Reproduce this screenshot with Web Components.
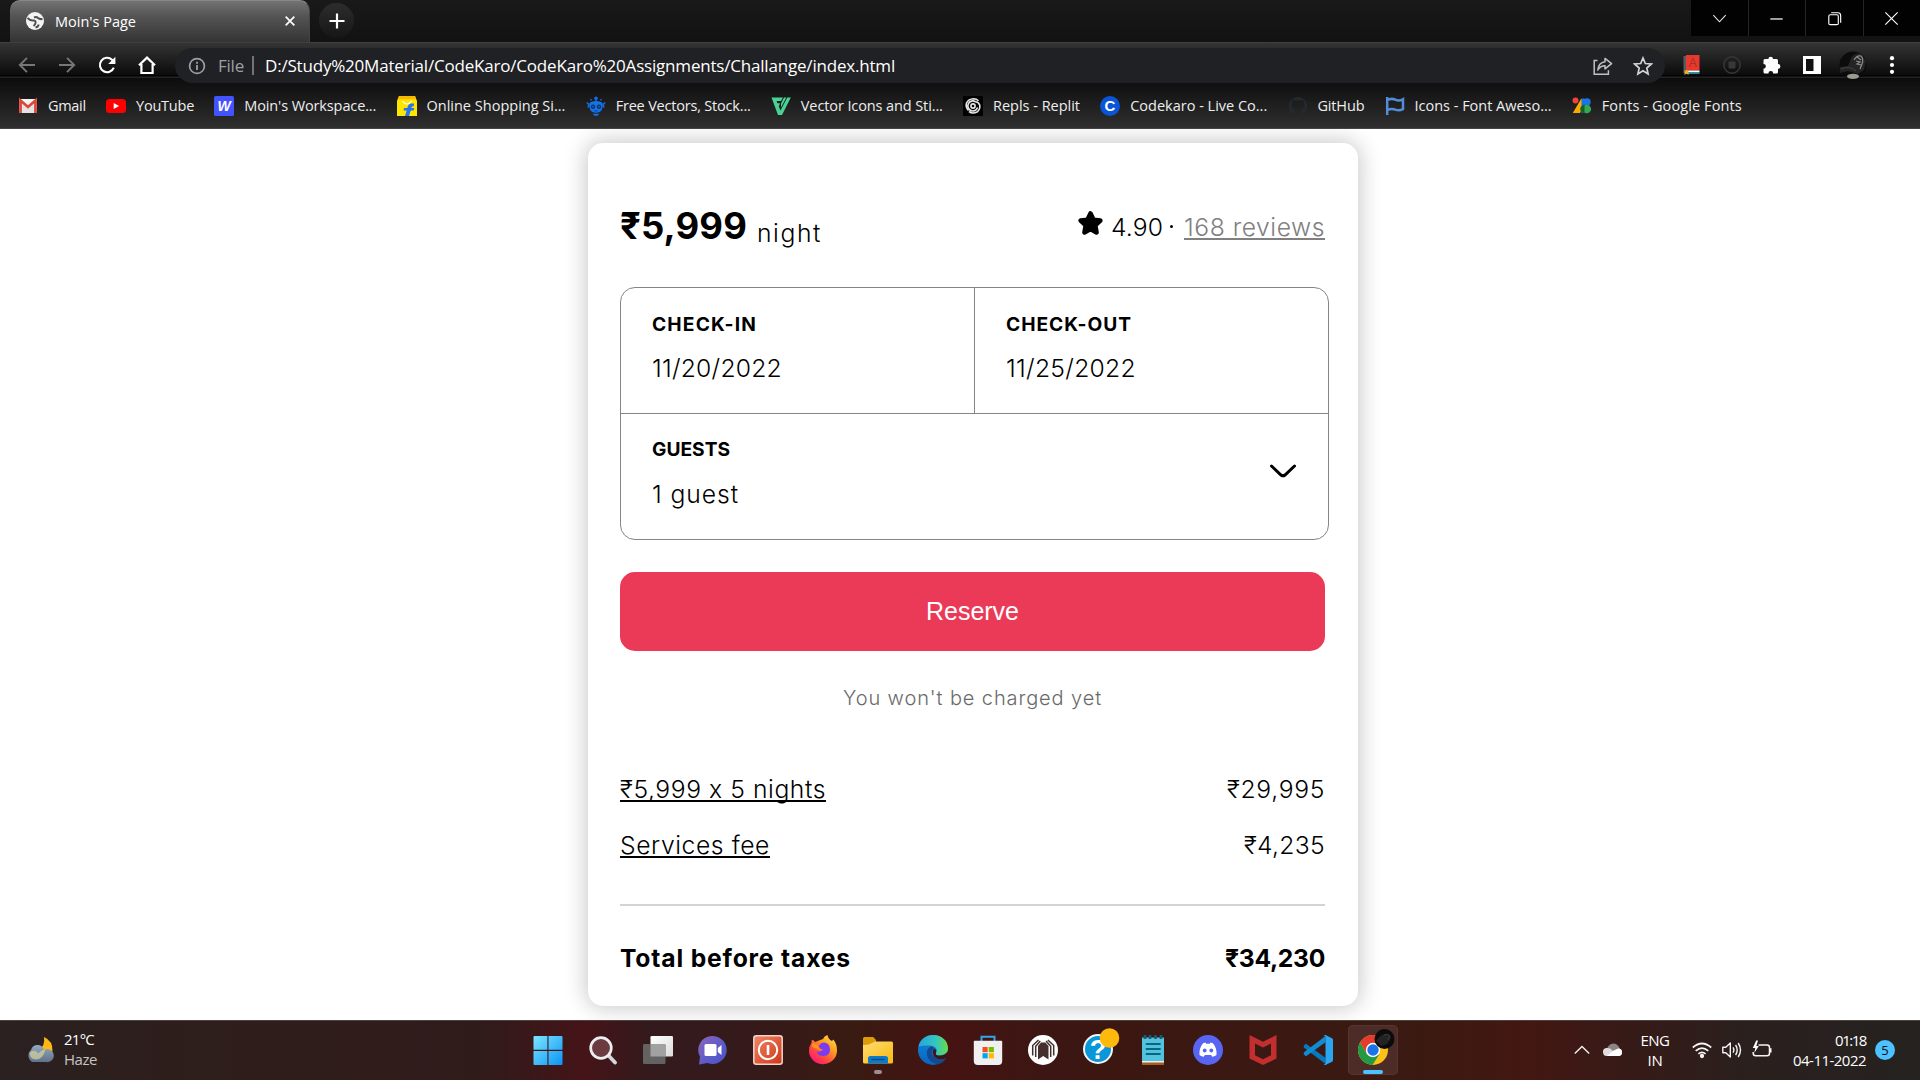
<!DOCTYPE html>
<html lang="en">
<head>
<meta charset="utf-8">
<title>Moin's Page</title>
<style>
html,body{margin:0;height:100%;overflow:hidden;background:#fff}
</style>
</head>
<body>
<desktop-screen></desktop-screen>
<script>
const define = (name, html, setup) => {
  const tpl = document.createElement('template');
  tpl.innerHTML = html;
  customElements.define(name, class extends HTMLElement {
    connectedCallback() {
      if (this.shadowRoot) return;
      this.attachShadow({mode: 'open'}).append(document.importNode(tpl.content, true));
      if (setup) setup(this, this.shadowRoot);
    }
  });
};

/* One line of text tracked so that it fills the given width. */
define('fit-text', `<style>:host{display:block;white-space:nowrap;flex:none}</style><span><slot></slot></span>`, (el, root) => {
  const w = +el.getAttribute('w');
  const span = root.querySelector('span');
  if (!w) return;
  const natural = span.getBoundingClientRect().width;
  span.style.letterSpacing = ((w - natural) / [...el.textContent].length).toFixed(3) + 'px';
  el.style.width = w + 'px';
});

const ICONS = {
  globe: `<svg viewBox="0 0 20 20"><circle cx="10" cy="10" r="9" fill="#f4f4f4"/><path d="M2.500 7q3 3 6 2.500 2.500 0 2 2.500-.5 2-2 3M17.500 8q-3 .5-4.500-1-1.500-1.500-4-.5M10.500 16.500q3-.5 3-3" fill="none" stroke="#505050" stroke-width="2"/></svg>`,
  close: `<svg viewBox="0 0 20 20"><path d="M5.2 5.2l9.6 9.6M14.8 5.2l-9.6 9.6" stroke="#fff" stroke-width="1.9"/></svg>`,
  plus: `<svg viewBox="0 0 20 20"><path d="M10 2.5v15M2.5 10h15" stroke="#fff" stroke-width="2.2"/></svg>`,
  back: `<svg viewBox="0 0 20 20"><path d="M18 10H3M10 2.8L2.8 10l7.2 7.2" fill="none" stroke="#777" stroke-width="1.9"/></svg>`,
  forward: `<svg viewBox="0 0 20 20"><path d="M2 10h15M10 2.8l7.2 7.2-7.2 7.2" fill="none" stroke="#777" stroke-width="1.9"/></svg>`,
  reload: `<svg viewBox="0 0 20 20"><path d="M16.8 12.6A7.2 7.2 0 1 1 15 4.7l1.6 1.7" fill="none" stroke="#fff" stroke-width="2.1"/><path d="M18.4 1.8v7.2h-7.2z" fill="#fff"/></svg>`,
  home: `<svg viewBox="0 0 20 20"><path d="M2 10.3L10 2.6l8 7.7M4.4 9v9h11.2V9" fill="none" stroke="#fff" stroke-width="2.2"/></svg>`,
  info: `<svg viewBox="0 0 20 20"><circle cx="10" cy="10" r="7.4" fill="none" stroke="#9aa0a6" stroke-width="1.7"/><path d="M10 9v5M10 5.8v2" stroke="#9aa0a6" stroke-width="1.8"/></svg>`,
  share: `<svg viewBox="0 0 20 20"><path d="M4.5 4.5H1.2v13.700h14.200v-4" fill="none" stroke="#bdc1c6" stroke-width="1.5"/><path d="M12 2.400l6.600 5.300-6.600 5.200V9.800c-3.400 0-5.600 1.400-7.200 4.200.4-4.400 3-7.600 7.200-8.200z" fill="none" stroke="#bdc1c6" stroke-width="1.5" stroke-linejoin="round"/></svg>`,
  bookmark: `<svg viewBox="0 0 20 20"><path d="M10 2l2.3 5.5 6 .5-4.5 4 1.3 5.900L10 14.800l-5.100 3.100 1.300-5.900-4.500-4 6-.5z" fill="none" stroke="#d0d3d8" stroke-width="1.7"/></svg>`,
  book: `<svg viewBox="0 0 20 20"><path d="M1.500 1h3v17h-3z" fill="#555d63"/><path d="M4 0h13.500v15.500H4z" fill="#e8392f"/><path d="M4 15.500h13.500v2H4z" fill="#fff"/><path d="M4 17.500h13.500v1.500H4z" fill="#1a86a8"/><path d="M2.500 15.500h4V20l-2-1.500-2 1.500z" fill="#e9b21d"/><text x="10.700" y="12.300" text-anchor="middle" font-family="Liberation Sans" font-size="12" fill="#b02c25">A</text></svg>`,
  record: `<svg viewBox="0 0 20 20"><circle cx="10" cy="10" r="8.200" fill="none" stroke="#383838" stroke-width="1.400"/><rect x="6.500" y="6.500" width="7" height="7" rx="1" fill="#383838"/></svg>`,
  puzzle: `<svg viewBox="0 0 20 20"><path d="M6.400 4a2.300 2.300 0 0 1 4.600 0h3.500a1.500 1.500 0 0 1 1.500 1.500V9a2.400 2.400 0 0 1 0 4.800v3.200a1.500 1.500 0 0 1-1.500 1.500h-3.300a2.400 2.400 0 0 0-4.800 0H3A1.500 1.500 0 0 1 1.500 17v-3.300a2.400 2.400 0 0 0 0-4.800V5.500A1.500 1.500 0 0 1 3 4z" fill="#fff"/></svg>`,
  panel: `<svg viewBox="0 0 20 20"><path d="M1 1h18v18H1z" fill="#fff"/><path d="M4 4h7.500v12H4z" fill="#111"/></svg>`,
  avatar: `<svg viewBox="0 0 28 28"><circle cx="14" cy="14" r="13.500" fill="#0c0c0c"/><path d="M1 16l8-1 3-8q4-6 10-4l5 7-2 9-6 4-10-3-8 2z" fill="#242424"/><path d="M15 9q3-5 7-4 3 3 1 8l-2 5M17 10l4 1-3 2 4 1M18 6l4 3" fill="none" stroke="#8d8d8d" stroke-width="1.200"/><path d="M2 18q8-4 15 2" fill="none" stroke="#444"/><ellipse cx="14" cy="25.300" rx="6" ry="2.600" fill="#9a9c92"/></svg>`,
  dots: `<svg viewBox="0 0 20 20" fill="#fff"><circle cx="10" cy="3.200" r="2.100"/><circle cx="10" cy="10" r="2.100"/><circle cx="10" cy="16.800" r="2.100"/></svg>`,
  wdown: `<svg viewBox="0 0 20 20"><path d="M3.500 6.500l6.500 7 6.500-7" fill="none" stroke="#eee" stroke-width="1.100"/></svg>`,
  wmin: `<svg viewBox="0 0 20 20"><path d="M3.500 10.500h13" stroke="#fff" stroke-width="1.300"/></svg>`,
  wmax: `<svg viewBox="0 0 20 20" fill="none" stroke="#fff" stroke-width="1.200"><rect x="4" y="6" width="10" height="10.500" rx="1.500"/><path d="M6.500 4h7a3 3 0 0 1 3 3v7.500"/></svg>`,
  wclose: `<svg viewBox="0 0 20 20"><path d="M3.500 3.500l13 13M16.500 3.500l-13 13" stroke="#fff" stroke-width="1.200"/></svg>`,
  gmail: `<svg viewBox="0 0 20 20"><path d="M1 3h18v14H1z" fill="#f4f4f4"/><path d="M4 17V8l6 5 6-5v9z" fill="#e4e2e2"/><path d="M2.500 17V4.500L10 11l7.500-6.500V17" fill="none" stroke="#da483c" stroke-width="2.800"/></svg>`,
  youtube: `<svg viewBox="0 0 20 20"><rect y="3" width="20" height="14" rx="3.500" fill="#f00"/><path d="M7.700 7v6l5.400-3z" fill="#fff"/></svg>`,
  workspace: `<svg viewBox="0 0 20 20"><rect width="20" height="20" rx="1.500" fill="#4353ff"/><text x="10" y="14.700" text-anchor="middle" font-family="Liberation Sans" font-size="14" font-weight="bold" font-style="italic" fill="#fff">W</text></svg>`,
  shopping: `<svg viewBox="0 0 20 20"><path d="M2 0h16l2 5v15H0V5z" fill="#ffe500"/><path d="M2 0h16l1.300 3.200H.7z" fill="#f7b900"/><path d="M5.500 5q4.500 6 9 0" fill="none" stroke="#fff" stroke-width="1.200"/><path d="M17 7.500c-5-.6-6 1.500-6.700 4.500H7l-.5 2.500h3.200L8 20h4l1.700-5.500h3L17.300 12h-3c.3-1.500 1-2 2.500-1.800z" fill="#2874f0"/></svg>`,
  robot: `<svg viewBox="0 0 20 20"><path d="M3.500 7C6 4.300 14 4.300 16.500 7q.8 4-.8 7-1.700 2.800-5.700 2.800T4.300 14q-1.600-3-.8-7z" fill="#1273eb"/><path d="M6.500 17.700h7l-2 2h-3z" fill="#1273eb"/><circle cx="10" cy="2.200" r="1.700" fill="#1273eb"/><path d="M.8 6.500l2 2-.8 3M19.200 6.500l-2 2 .8 3M5.500 4.500l-1-1.500M14.500 4.500l1-1.500M10 3v3" stroke="#1273eb" stroke-width="1.300" fill="none"/><circle cx="7" cy="10.700" r="2.200" fill="#15315a"/><circle cx="13" cy="10.700" r="2.200" fill="#15315a"/><circle cx="7" cy="10.700" r=".8" fill="#1273eb"/><circle cx="13" cy="10.700" r=".8" fill="#1273eb"/><path d="M8.300 14.800h3.400" stroke="#0a4194"/></svg>`,
  vector: `<svg viewBox="0 0 20 20"><path d="M.5 1.500h11.500L10 5H5.600l.8 2.200H9L7.800 10.400l1.700 4.100L16.300 1.500H19.800L11 19H7z" fill="#49d295"/><path d="M13 1.500h2.300L10 11.500V7.500z" fill="#49d295"/></svg>`,
  replit: `<svg viewBox="0 0 20 20"><rect width="20" height="20" rx="1" fill="#000"/><g fill="none" stroke="#e6e6e6" stroke-width="1.600"><circle cx="10" cy="10" r="2.100"/><path d="M14.600 11.500A5 5 0 1 1 12.500 5.700q3 .3 4.200 3.300.8 4.500-2.700 7-4.500 2.200-8-.5"/><path d="M5.500 14.500Q2.200 11 3.500 7q2-4 7-4.300 3 0 5 2"/></g></svg>`,
  codekaro: `<svg viewBox="0 0 20 20"><circle cx="10" cy="10" r="10" fill="#0a54d8"/><text x="10" y="15.200" text-anchor="middle" font-family="Liberation Sans" font-size="15" font-weight="bold" fill="#fff">C</text></svg>`,
  github: `<svg viewBox="0 0 20 20"><path d="M6.500 19A9.300 9.300 0 1 1 13.500 19v-3q0-1.500-1-2.200 4-.6 4-4.600 0-1.600-1-2.800.3-1.400-.2-2.600-1.300 0-2.700 1a9 9 0 0 0-5.200 0q-1.400-1-2.700-1-.5 1.200-.2 2.600-1 1.200-1 2.800 0 4 4 4.600-1 .7-1 2.200z" fill="#23292f"/></svg>`,
  flag: `<svg viewBox="0 0 20 20"><path d="M2.200 1v18M2.200 4.300q4-2.500 8-.6t7.800-.5v10q-4 2-7.800.4t-8 .5" fill="none" stroke="#538dd7" stroke-width="2.500"/></svg>`,
  gfonts: `<svg viewBox="0 0 20 20"><path d="M9 3h6L8 17H.8z" fill="#fbab00"/><path d="M9.500 2.500h3V17h-3z" fill="#1a73e8"/><circle cx="15" cy="6" r="3.700" fill="#1a73e8"/><circle cx="14.800" cy="13" r="4.300" fill="#34a853"/><path d="M12.500 8.700a4.300 4.300 0 0 0 0 8.600z" fill="#0d652d"/><circle cx="3.500" cy="4.500" r="3" fill="#f44336"/></svg>`,
  star: `<svg viewBox="0 0 25 25"><path d="M12.500 2.500l3 6.200 6.800.9-5 4.800 1.200 7-6-3.300-6 3.300 1.200-7-5-4.800 6.800-.9z" fill="#000" stroke="#000" stroke-width="4.600" stroke-linejoin="round"/></svg>`,
  chevron: `<svg viewBox="0 0 26 26"><path d="M1.500 8l9.500 9q2 1.600 4 0l9.500-9" fill="none" stroke="#000" stroke-width="3" stroke-linecap="round"/></svg>`,
  weather: `<svg viewBox="0 0 30 30"><defs><linearGradient id="c" x2="0" y2="1"><stop stop-color="#93a9bf"/><stop offset="1" stop-color="#61728a"/></linearGradient></defs><path d="M20 1q9 4 8.500 14-2 4-6 5l-8-6q7-4 5.500-13z" fill="#fdb813"/><path d="M8 26a7.500 7.500 0 0 1-1-12q1.500-5 6.500-5t6.500 5a6.500 6.500 0 1 1 2 12z" fill="url(#c)"/><path d="M5.500 17q5-4.500 9 .5 3-4 7-4-2.500 10-10 10-5 0-6-6.500z" fill="#cfcf9d" opacity=".75"/></svg>`,
  start: `<svg viewBox="0 0 30 30"><defs><linearGradient id="s" x2="1" y2="1"><stop stop-color="#7be7ff"/><stop offset="1" stop-color="#0c93f5"/></linearGradient></defs><path d="M.5 2a1 1 0 0 1 1-1H14.400v13.800H.5zM15.500 1h13a1 1 0 0 1 1 1v12.800h-14zM.5 15.900h13.900V30H1.500a1 1 0 0 1-1-1zM15.500 15.900h14V29a1 1 0 0 1-1 1h-13z" fill="url(#s)"/></svg>`,
  search: `<svg viewBox="0 0 30 30"><path d="M20.500 20.500l6.500 7" stroke="#d3d6da" stroke-width="3.800" stroke-linecap="round"/><circle cx="13" cy="13" r="10.300" fill="#6a3b40" stroke="#eceef0" stroke-width="2.700"/></svg>`,
  taskview: `<svg viewBox="0 0 30 30"><defs><linearGradient id="t" x2="1" y2="1"><stop stop-color="#fff"/><stop offset="1" stop-color="#dcdcdc"/></linearGradient></defs><rect x="7.500" y="1" width="22.500" height="20.500" rx="1.300" fill="url(#t)"/><rect y="9" width="22.500" height="20" rx="1.300" fill="#626262"/><path d="M7.500 9H21.200a1.300 1.300 0 0 1 1.300 1.300V21.500h-15z" fill="#a1a1a1"/></svg>`,
  chat: `<svg viewBox="0 0 30 30"><defs><linearGradient id="h" x2="1" y2="1"><stop stop-color="#8d66b8"/><stop offset=".6" stop-color="#5a5bc9"/><stop offset="1" stop-color="#4a50c8"/></linearGradient></defs><path d="M15 1a14 14 0 1 1-5.500 27L1 29.500l1-7.800A14 14 0 0 1 15 1z" fill="url(#h)"/><rect x="6.500" y="9" width="12" height="12" rx="1.500" fill="#fff"/><path d="M19.800 13l3.700-3v10l-3.700-3z" fill="#fff"/></svg>`,
  power: `<svg viewBox="0 0 30 30"><defs><linearGradient id="p" x2="1" y2="1"><stop stop-color="#f08766"/><stop offset="1" stop-color="#cf3516"/></linearGradient></defs><rect x=".8" y=".8" width="28.400" height="28.400" rx="2.500" fill="url(#p)" stroke="#efd5cf" stroke-width="1.500"/><circle cx="15" cy="15" r="9.200" fill="none" stroke="#fff" stroke-width="2"/><path d="M15 10v10" stroke="#fff" stroke-width="2.600"/></svg>`,
  firefox: `<svg viewBox="0 0 30 30"><defs><linearGradient id="f" x1="1" x2=".2" y2="1"><stop stop-color="#fff44f"/><stop offset=".4" stop-color="#ff9a1f"/><stop offset=".7" stop-color="#ff4a3d"/><stop offset="1" stop-color="#ff1283"/></linearGradient></defs><path d="M15 4Q16 1 19.500 0q.5 4 4.500 6l1.300-1.500Q29 9 29 15.500A14 13.500 0 0 1 1 16q0-5 2.500-8l.3-3Q6 5 7 7z" fill="url(#f)"/><path d="M15.500 7.500q6 0 6.500 6.500.3 7-6.500 7-5.500 0-7-4.500 4 1 6.500-1.500-3-.5-4.200-3.500 1-3.500 4.700-4z" fill="#7a3cf0"/><path d="M10.200 11.500Q8.500 8 4.500 8.500 3 12 6 13q3 0 4.500 2l5-.5q-4.500 0-5.300-3z" fill="#ff9320"/></svg>`,
  folder: `<svg viewBox="0 0 30 30"><defs><linearGradient id="o" x2="1" y2="1"><stop stop-color="#ffdd72"/><stop offset="1" stop-color="#f9b90f"/></linearGradient></defs><path d="M0 3.500A1.500 1.500 0 0 1 1.500 2h8.700L13 5v6H0z" fill="#dc9c0a"/><path d="M0 10q5 .5 9-2l3-1.500h16.500A1.500 1.500 0 0 1 30 8v19a1.500 1.500 0 0 1-1.500 1.500h-27A1.500 1.500 0 0 1 0 27z" fill="url(#o)"/><path d="M5 28.500v-5a2.500 2.500 0 0 1 2.500-2.500h15a2.500 2.500 0 0 1 2.500 2.500v5z" fill="#0d79c8"/><path d="M9 24.500h12" stroke="#074f87" stroke-width="1.500" stroke-linecap="round"/></svg>`,
  edge: `<svg viewBox="0 0 30 30"><defs><linearGradient id="e" x2="1"><stop stop-color="#23a5e0"/><stop offset=".6" stop-color="#35c7bd"/><stop offset="1" stop-color="#69dd42"/></linearGradient><linearGradient id="g" x2="0" y2="1"><stop stop-color="#128bd8"/><stop offset="1" stop-color="#0a63bd"/></linearGradient></defs><circle cx="15" cy="15" r="15" fill="url(#g)"/><path d="M.5 11.500C2 4 8.500 0 15 0c9 0 15 6 15 13 0 5-4 7.500-8 7.500-3.500 0-5-1.300-4-2.700 2-3 0-6.300-4.500-7-5-.5-9 0-13 .7z" fill="url(#e)"/><path d="M13.500 11Q8 13.500 9 20t11 9.500q6-2 8.500-7-6 3.500-11 .5-6-4-1.500-10z" fill="#124a91"/><path d="M18 17.800q-1 2.700 4 2.700 4.500 0 8-4l1 5-2.500 1.500q-6 2.500-10.500 0-5-3.500-2-9.500 3 1 2 4.300z" fill="#421512"/></svg>`,
  store: `<svg viewBox="0 0 30 30"><path d="M8.500 7V1.800h13V7" fill="none" stroke="#31a7e4" stroke-width="2"/><path d="M.8 6.500a.8.8 0 0 1 .8-.8h26.800a.8.8 0 0 1 .8.800V26a4 4 0 0 1-4 4H4.800a4 4 0 0 1-4-4z" fill="#f0f0f0"/><path d="M9.500 12h5.200v5.200H9.500z" fill="#f25022"/><path d="M15.700 12h5.200v5.200h-5.200z" fill="#7fba00"/><path d="M9.500 18.200h5.200v5.200H9.500z" fill="#00a4ef"/><path d="M15.700 18.200h5.200v5.200h-5.200z" fill="#ffb900"/></svg>`,
  arch: `<svg viewBox="0 0 30 30"><circle cx="15" cy="15" r="15" fill="#fff"/><path d="M10 24.500V11l3-3.500h4.500l3 3.500v13.500L15.200 21z" fill="#452f2d"/><path d="M4.700 20.500V10.500L10.500 5M25.700 20.500V10.500L19.900 5M7.700 22V11.300L12.300 6M22.700 22V11.300L18.100 6" fill="none" stroke="#452f2d" stroke-width="1.500"/></svg>`,
  help: `<svg viewBox="0 0 38 38"><circle cx="15" cy="22" r="14" fill="#0a97d9" stroke="#f4f4f4" stroke-width="2"/><text x="15" y="31.500" text-anchor="middle" font-family="Liberation Sans" font-size="27" font-weight="bold" fill="#fff">?</text><circle cx="26.500" cy="11" r="9.800" fill="#ffb90d"/></svg>`,
  notepad: `<svg viewBox="0 0 30 30"><path d="M4 27h22v3H4z" fill="#a75c20"/><path d="M4 25h22v2.500H4z" fill="#f1eee7"/><path d="M4 2.500h22V26H4z" fill="#52c3de"/><path d="M7 0v4M12 0v4M17.500 0v4M23 0v4" stroke="#135d78" stroke-width="2.600"/><path d="M8.500 9h13.500M8.500 14h13.500M8.500 19h13.500" stroke="#08667f" stroke-width="1.800" stroke-linecap="round"/></svg>`,
  discord: `<svg viewBox="0 0 30 30"><circle cx="15" cy="15" r="15" fill="#5865f2"/><path d="M10 8.300l2.500-.8.700 1.200h3.600l.7-1.200 2.500.8q4 5 3.500 11.700-2 1.500-4.300 1.700l-1-1.700h-6.400l-1 1.700Q8.500 21.500 6.500 20 6 13.300 10 8.300z" fill="#fff"/><circle cx="11.700" cy="15.500" r="1.900" fill="#5865f2"/><circle cx="18.300" cy="15.500" r="1.900" fill="#5865f2"/></svg>`,
  mcafee: `<svg viewBox="0 0 30 30"><path d="M1.500 0L15 6.800 28.500 0v23.500L15 30 1.500 23.500zM7 8.500v11.700l8 4 8-4V8.500l-8 4z" fill="#c22f2e" fill-rule="evenodd"/></svg>`,
  vscode: `<svg viewBox="0 0 30 30"><path d="M.8 10.500L3 8.700l19.500 14V29L.8 12.500z" fill="#0878be"/><path d="M.8 19.500L3 21.300l19.500-14V1L.8 17.500z" fill="#108cd4"/><path d="M22.500 0L29 3.200q1 .4 1 1.500v20.600q0 1.100-1 1.500L22.500 30q-1 .2-1.800-.7 1.800.2 1.800-1.600V2.300Q22.500.5 20.700.7q.8-.9 1.800-.7z" fill="#2aa5ef"/></svg>`,
  chrome: `<svg viewBox="0 0 38 38"><circle cx="15" cy="23" r="15" fill="#fbc116"/><path d="M15 8A15 15 0 0 0 2 15.500L8.500 26.500 15 16h13.200A15 15 0 0 0 15 8z" fill="#e33b2e"/><path d="M2 15.500A15 15 0 0 0 14.500 38L21.500 27 15 30q-4 0-6.500-3.500z" fill="#229a45"/><circle cx="15" cy="23" r="7.200" fill="#fff"/><circle cx="15" cy="23" r="5.700" fill="#1a73e8"/><circle cx="26.500" cy="12" r="10" fill="#0b0b0b"/><path d="M18 14q4-6 9-7 5 0 6 4l-4 6-6 2z" fill="#232323"/><path d="M26 8q4-2 6 1l-2 4" fill="none" stroke="#3d3d3d"/></svg>`,
  up: `<svg viewBox="0 0 20 20"><path d="M2 14l8-8 8 8" fill="none" stroke="#eee" stroke-width="1.600"/></svg>`,
  cloud: `<svg viewBox="0 0 20 20"><path d="M3.500 11Q4 6 8 4q5-2 8 3l1 4z" fill="#8e8583"/><path d="M4.500 16a4 4 0 0 1-1-8q4-.5 6 3l6-2.500A3.800 3.800 0 0 1 16 16z" fill="#ddd"/><path d="M4 16l6-5 5.500-2.500A3.800 3.800 0 0 1 16 16z" fill="#fff"/></svg>`,
  wifi: `<svg viewBox="0 0 20 20" fill="none" stroke="#f4f4f4" stroke-width="1.700"><path d="M.8 7.500q9.200-8 18.400 0M3.700 10.800q6.300-5.500 12.600 0M6.400 13.800q3.600-3 7.200 0"/><circle cx="10" cy="16" r="1.300" fill="#fff"/></svg>`,
  speaker: `<svg viewBox="0 0 20 20" fill="none" stroke="#f4f4f4" stroke-width="1.400"><path d="M.8 7.300h3L8.300 3v14l-4.500-4.300h-3z" stroke-linejoin="round"/><path d="M11 7.300q1.800 2.700 0 5.400M13.600 5q3.200 5 0 10M16.200 3q4.600 7 0 14"/></svg>`,
  battery: `<svg viewBox="0 0 20 20"><path d="M6.500 5H15a2.500 2.500 0 0 1 2.500 2.500v5.800a2.500 2.500 0 0 1-2.500 2.500H3.700a2.500 2.500 0 0 1-2.500-2.500V12" fill="none" stroke="#f4f4f4" stroke-width="1.500"/><path d="M18 8.200h1.500v4.400H18z" fill="#fff"/><path d="M4.200.5L.8 8h2.500l-1 5 4.500-7H4.300L6 .5z" fill="#fff"/></svg>`
};

define('ui-icon', `<style>:host{display:block;flex:none;width:var(--s,20px);height:var(--s,20px)}svg{display:block;width:100%;height:100%}</style>`, (el, root) => {
  const box = document.createElement('template');
  box.innerHTML = ICONS[el.getAttribute('name')];
  root.append(box.content);
});

define('tab-strip', `<style>
:host{display:flex;height:42px;background:linear-gradient(#191919,#121212);justify-content:space-between;align-items:flex-start;font-size:14.5px}
.left{display:flex;padding-left:10px}
.tab{box-sizing:border-box;width:300px;height:43px;border-radius:10px 10px 0 0;background:linear-gradient(#737373,#555 35%,#333);display:flex;align-items:center;padding:0 10px 2px 15px;color:#fff;border-top:1px solid #888;border-right:1px solid #444}
.tab fit-text{margin-left:10px;flex:1}
.add{width:35px;height:35px;border-radius:50%;background:linear-gradient(#2d2d2d,#161616);margin:3px 0 0 9px;display:flex;align-items:center;justify-content:center}
.win{display:flex;width:229px;height:36px;background:#252525;gap:1px}
.win span{flex:1;background:#020202;display:flex;align-items:center;justify-content:center;--s:19px}
</style>
<div class="left"><div class="tab"><ui-icon name="globe"></ui-icon><fit-text w="81">Moin's Page</fit-text><ui-icon name="close" style="--s:18px"></ui-icon></div><div class="add"><ui-icon name="plus"></ui-icon></div></div>
<div class="win"><span><ui-icon name="wdown"></ui-icon></span><span><ui-icon name="wmin"></ui-icon></span><span><ui-icon name="wmax"></ui-icon></span><span><ui-icon name="wclose"></ui-icon></span></div>`);

define('address-bar', `<style>
:host{display:flex;box-sizing:border-box;height:36px;background:linear-gradient(#343434,#0c0c0c 90%,#000 94%,#2b2b2b 98%,#111);border-top:1px solid #3f3f3f;align-items:flex-start}
.nav{display:flex;gap:20px;padding:12px 0 0 17px;width:158px}
.omni{box-sizing:border-box;width:1490px;height:35px;margin-top:5px;border-radius:18px;background:#202124;display:flex;align-items:center;padding:0 12px;color:#fff;font-size:17px;position:relative;z-index:1}
.file{color:#9aa0a6;margin-left:11px}
.bar{width:2px;height:19px;background:#70757a;margin:0 11px 0 8px}
.url{flex:1}
.acts{display:flex;gap:20px}
.ext{display:flex;gap:20px;align-items:center;height:28px;margin:8px 0 0 17px}
.ext ui-icon[name=avatar]{margin:0 -5px 0 -3px}
</style>
<div class="nav"><ui-icon name="back"></ui-icon><ui-icon name="forward"></ui-icon><ui-icon name="reload"></ui-icon><ui-icon name="home"></ui-icon></div>
<div class="omni"><ui-icon name="info"></ui-icon><fit-text class="file" w="26">File</fit-text><i class="bar"></i><div class="url"><fit-text w="630">D:/Study%20Material/CodeKaro/CodeKaro%20Assignments/Challange/index.html</fit-text></div><div class="acts"><ui-icon name="share"></ui-icon><ui-icon name="bookmark"></ui-icon></div></div>
<div class="ext"><ui-icon name="book"></ui-icon><ui-icon name="record"></ui-icon><ui-icon name="puzzle"></ui-icon><ui-icon name="panel"></ui-icon><ui-icon name="avatar" style="--s:28px"></ui-icon><ui-icon name="dots"></ui-icon></div>`);

const MARKS = [['gmail','Gmail',38],['youtube','YouTube',58],['workspace',"Moin's Workspace...",132],['shopping','Online Shopping Si...',139],['robot','Free Vectors, Stock...',135],['vector','Vector Icons and Sti...',142],['replit','Repls - Replit',87],['codekaro','Codekaro - Live Co...',137],['github','GitHub',47],['flag','Icons - Font Aweso...',137],['gfonts','Fonts - Google Fonts',140]];
define('bookmark-bar', `<style>
:host{display:flex;box-sizing:border-box;height:51px;background:linear-gradient(#0c0c0c,#2f2f2f);border-bottom:1px solid #444;padding:5px 0 0 18px;gap:20.3px;align-items:center;color:#eee;font-size:14.5px}
div{display:flex;gap:9.9px;align-items:center}
</style>${MARKS.map(([i, t, w]) => `<div><ui-icon name="${i}"></ui-icon><fit-text w="${w}">${t}</fit-text></div>`).join('')}`);

define('stay-field', `<style>
:host{display:block;box-sizing:border-box;padding:22px 32px 0 31px}
.label{font-weight:700;font-size:19.2px;line-height:28px;margin-bottom:12px}
.value{font-size:24.7px;line-height:36px}
</style><div class="label"><slot name="label"></slot></div><div class="value"><slot></slot></div>`);

define('price-row', `<style>:host{display:flex;justify-content:space-between;line-height:36px;font-size:24.7px}</style><slot></slot>`);

define('booking-card', `<style>
:host{display:block;box-sizing:border-box;width:770px;height:863px;border-radius:15px;background:#fff;box-shadow:0 0 22px 2px rgba(0,0,0,.22);padding:62px 33px 0 32px;color:#000;font-family:Inter,"Noto Sans",sans-serif;font-weight:350;font-size:24.7px}
header{display:flex;height:82px;line-height:40px;align-items:flex-start}
.price{font-size:36.5px;font-weight:700;margin-top:1px}
.night{margin:8px 0 0 10px}
.rating{display:flex;margin:2px 0 0 auto}
.rating ui-icon{--s:25px;margin:4px 8px 0 0}
.dot{width:3px;height:3px;border-radius:50%;background:#000;margin:18px 11px 0 7px}
.u{text-decoration:underline;text-decoration-thickness:2px;text-underline-offset:2px;text-decoration-skip-ink:none}
.grid{box-sizing:border-box;height:253px;margin-right:-4px;border:1px solid #858585;border-radius:15px;display:flex;flex-direction:column}
.dates{display:flex;height:125px;border-bottom:1px solid #858585}
.dates stay-field{flex:1}
.dates stay-field+stay-field{border-left:1px solid #858585}
.guests{display:flex;justify-content:space-between;padding-right:32px}
.guests stay-field{padding-top:21px}
.guests fit-text:not([slot]){margin-top:13px}
.guests ui-icon{--s:26px;margin-top:44px}
button{display:flex;align-items:center;justify-content:center;width:100%;height:79px;margin:32px 0;border:0;border-radius:15px;background:#eb3a57;color:#fff;font:25px "Liberation Sans",Arial,sans-serif;padding:0}
.note{display:flex;justify-content:center;font-size:20px;line-height:30px;color:#6a6a6a;margin-bottom:58px}
.rows{display:flex;flex-direction:column;gap:20px}
hr{border:0;height:2px;background:#d4d4d4;margin:41px 0 34px}
.total{font-weight:700}
</style>
<header><fit-text class="price" w="127">₹5,999</fit-text><fit-text class="night" w="65">night</fit-text>
<div class="rating"><ui-icon name="star"></ui-icon><fit-text w="52">4.90</fit-text><i class="dot"></i><fit-text w="141" class="u" style="color:#808080">168 reviews</fit-text></div></header>
<section class="grid"><div class="dates">
<stay-field><fit-text slot="label" w="105">CHECK-IN</fit-text><fit-text w="130">11/20/2022</fit-text></stay-field>
<stay-field><fit-text slot="label" w="126">CHECK-OUT</fit-text><fit-text w="130">11/25/2022</fit-text></stay-field></div>
<div class="guests"><stay-field><fit-text slot="label" w="78">GUESTS</fit-text><fit-text w="87">1 guest</fit-text></stay-field><ui-icon name="chevron"></ui-icon></div></section>
<button><fit-text w="93">Reserve</fit-text></button>
<div class="note"><fit-text w="259">You won't be charged yet</fit-text></div>
<div class="rows"><price-row><fit-text class="u" w="209">₹5,999 x 5 nights</fit-text><fit-text w="98">₹29,995</fit-text></price-row>
<price-row><fit-text class="u" w="150">Services fee</fit-text><fit-text w="81">₹4,235</fit-text></price-row></div>
<hr>
<price-row class="total"><fit-text w="231">Total before taxes</fit-text><fit-text w="100">₹34,230</fit-text></price-row>`);

const APPS = ['start','search','taskview','chat','power','firefox','folder','edge','store','arch','help','notepad','discord','mcafee','vscode','chrome'];
define('task-bar', `<style>
:host{display:flex;box-sizing:border-box;height:60px;border-top:1px solid #4c413e;color:#fff;font-size:15px;line-height:20px;background:linear-gradient(90deg,#2a2120 0,#2e1e1c 200px,#301b1b 480px,#451418 585px,#331a1c 650px,#351a1c 730px,#391b12 850px,#451312 950px,#3c1612 1040px,#3a1a12 1400px,#431712 1530px,#351b18 1640px,#2a201e 1750px,#252220 1920px)}
.weather{box-sizing:border-box;display:flex;width:520px;padding:8px 0 0 24px;gap:10px}
.weather ui-icon{--s:30px;margin-top:7px}
.dim{color:#c9c3c1}
.apps{display:flex;padding-top:4px}
.app{width:50px;height:50px;margin:0 2.5px;box-sizing:border-box;display:flex;align-items:center;justify-content:center;position:relative;--s:30px}
.app.big{--s:38px}.app.big ui-icon{margin:-8px -8px 0 0}
.app.run{background:#4d2b26;border-radius:5px;box-shadow:inset 0 0 0 1px #56352f}
.app.run:after,.app.idle:after{content:"";position:absolute;left:15px;bottom:1px;width:20px;height:4px;border-radius:2px;background:#4cc2ff}
.app.idle:after{left:21px;width:8px;background:#9d8f8d}
.tray{display:flex;margin-left:auto;width:348px;padding-top:9px}
.tray>*{flex:none}
.c{display:flex;flex-direction:column;align-items:center}
.r{display:flex;flex-direction:column;align-items:flex-end}
.tray ui-icon{margin-top:10px}
.n{width:20px;height:20px;border-radius:50%;background:#4cc2ff;color:#111;text-align:center;font-size:13px;margin:10px 0 0 9px}
</style>
<div class="weather"><ui-icon name="weather"></ui-icon><div><fit-text w="30">21°C</fit-text><fit-text class="dim" w="33">Haze</fit-text></div></div>
<div class="apps">${APPS.map(a => `<div class="app ${a === 'chrome' ? 'run big' : a === 'help' ? 'big' : a === 'folder' ? 'idle' : ''}"><ui-icon name="${a}"></ui-icon></div>`).join('')}</div>
<div class="tray"><ui-icon name="up" style="--s:18px;margin-left:1px;margin-top:11px"></ui-icon><ui-icon name="cloud" style="margin-left:12px"></ui-icon>
<div class="c" style="width:30px;margin-left:17px"><fit-text w="29">ENG</fit-text><fit-text w="15">IN</fit-text></div>
<ui-icon name="wifi" style="margin-left:22px"></ui-icon><ui-icon name="speaker" style="margin-left:10px"></ui-icon><ui-icon name="battery" style="margin-left:10px"></ui-icon>
<div class="r" style="width:74px;margin-left:20px"><fit-text w="31">01:18</fit-text><fit-text w="73">04-11-2022</fit-text></div><span class="n">5</span></div>`);

define('desktop-screen', `<style>
:host{display:flex;flex-direction:column;width:1920px;height:1080px;overflow:hidden;background:#fff;font-family:"Open Sans","Noto Sans",sans-serif}
main{flex:1;min-height:0;overflow:hidden;display:flex;padding:14px 0 0 588px;align-items:flex-start}
address-bar{position:relative;z-index:1}
</style><tab-strip></tab-strip><address-bar></address-bar><bookmark-bar></bookmark-bar><main><booking-card></booking-card></main><task-bar></task-bar>`);
</script>
</body>
</html>
